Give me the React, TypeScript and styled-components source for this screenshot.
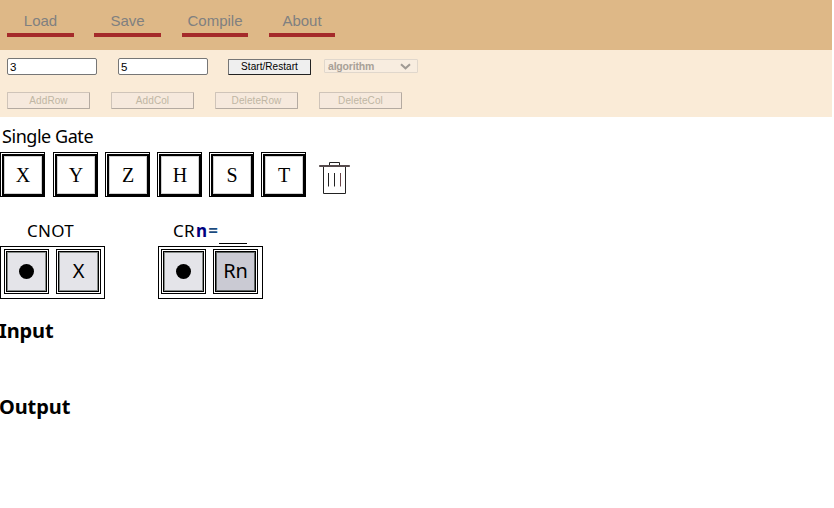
import React from "react";
import styled, { createGlobalStyle } from "styled-components";

const Global = createGlobalStyle`
  * { box-sizing: border-box; }
  body { margin: 0; background: #fff; color: #000; font-family: "Noto Sans", sans-serif; overflow: hidden; }
`;

const Page = styled.div`
  height: 508px;
  padding-right: 2px;
  overflow: hidden;
`;

const Nav = styled.nav`
  display: flex;
  height: 50px;
  padding-left: 7px;
  background: #deb887;
`;

const NavItem = styled.a<{ $width: number; $gap: number }>`
  width: ${(p) => p.$width}px;
  height: 37px;
  margin-right: ${(p) => p.$gap}px;
  padding-top: 12px;
  border-bottom: 4px solid #a52a2a;
  font: 15px/18px "Liberation Sans", Arial, sans-serif;
  color: #808080;
  text-align: center;
  white-space: nowrap;
`;

const Controls = styled.section`
  height: 67px;
  padding: 8px 7px 0;
  background: #faebd7;
`;

const ControlRow = styled.div<{ $height: number }>`
  display: flex;
  align-items: flex-start;
  height: ${(p) => p.$height}px;
`;

const NumberField = styled.input`
  width: 90px;
  height: 17px;
  margin: 0 21px 0 0;
  padding: 0 2px;
  border: 1px solid #767676;
  border-radius: 2px;
  background: #fff;
  font: 11.5px "Liberation Sans", Arial, sans-serif;
  color: #000;
  outline: none;
  &:nth-of-type(2) { margin-right: 20px; }
`;

const StartButton = styled.button`
  width: 83px;
  height: 16px;
  margin: 1px 13px 0 0;
  padding: 0 0 1px;
  border: 1px solid #222;
  border-top-color: #767676;
  border-left-color: #767676;
  border-radius: 1px;
  background: #efefef;
  font: 10px/13px "Liberation Sans", Arial, sans-serif;
  letter-spacing: 0.05px;
  color: #000;
`;

const Select = styled.div`
  display: flex;
  align-items: center;
  justify-content: space-between;
  width: 94px;
  height: 14px;
  margin-top: 1px;
  padding: 0 6px 0 3px;
  border: 1px solid #e0d7cc;
  border-radius: 1px;
  background: #f8ede0;
  font: bold 10.5px/12px "Liberation Sans", Arial, sans-serif;
  letter-spacing: -0.2px;
  color: #a8a198;
`;

const EditButton = styled.button`
  width: 83px;
  height: 17px;
  margin: 0 21px 0 0;
  padding: 0;
  border: 1px solid #b4aaa1;
  border-top-color: #cfc4b9;
  border-left-color: #cfc4b9;
  border-radius: 1px;
  background: #f6e9dd;
  font: 10px/14px "Liberation Sans", Arial, sans-serif;
  letter-spacing: 0.1px;
  color: #bfb6a3;
`;

const GateTitle = styled.div`
  height: 35px;
  padding: 5px 0 0 2px;
  font-size: 18px;
  line-height: 28px;
  letter-spacing: -0.45px;
`;

const GateRow = styled.div`
  display: flex;
  gap: 7px;
  height: 45px;
`;

const Cell = styled.div`
  width: 45px;
  height: 45px;
  padding: 1px;
  border: 1px solid #000;
  background: #fff;
  ${GateRow} > &:first-child { margin-right: 1px; }
`;

const Face = styled.div<{ $kind: "single" | "control" | "rotate" }>`
  display: flex;
  align-items: center;
  justify-content: center;
  width: ${(p) => (p.$kind === "single" ? 42 : 41)}px;
  height: ${(p) => (p.$kind === "single" ? 42 : 41)}px;
  padding-top: ${(p) => (p.$kind === "single" ? 1 : 0)}px;
  border: ${(p) => (p.$kind === "single" ? 2 : 1)}px solid #000;
  background: ${(p) => (p.$kind === "single" ? "#fff" : p.$kind === "control" ? "#e4e4e9" : "#cacad3")};
  box-shadow: inset 0 0 0 1px ${(p) => (p.$kind === "single" ? "#d0d0d0" : p.$kind === "control" ? "#868b88" : "#5d6361")};
  font: ${(p) => (p.$kind === "single" ? '20px "Liberation Serif", "Times New Roman", serif' : '20px/28px "Noto Sans", sans-serif')};
  letter-spacing: ${(p) => (p.$kind === "rotate" ? -0.1 : 0)}px;
`;

const FaceText = styled.span`
  margin-top: -2px;
`;

const TrashIcon = styled.svg`
  display: block;
  margin: 10px 0 0 6px;
`;

const PairArea = styled.div`
  display: flex;
  gap: 53px;
  margin-top: 20px;
  height: 82px;
`;

const Pair = styled.div`
  width: 105px;
`;

const PairTitle = styled.div<{ $indent: number }>`
  display: flex;
  height: 29px;
  padding-left: ${(p) => p.$indent}px;
  font-size: 17px;
  line-height: 28px;
  letter-spacing: 0.3px;
  white-space: nowrap;
`;

const Variable = styled.span`
  margin-left: 1px;
  color: #000080;
  font-weight: 700;
`;

const Equals = styled.span`
  width: 12px;
  text-align: center;
  color: #1a4b80;
  font-weight: 600;
`;

const Blank = styled.span`
  width: 28px;
  height: 27px;
  border-bottom: 1px solid #000;
`;

const PairBox = styled.div<{ $inset: number }>`
  display: flex;
  gap: 7px;
  height: 53px;
  padding: 2px 0 2px ${(p) => p.$inset}px;
  border: 1px solid #000;
`;

const Dot = styled.span`
  width: 15px;
  height: 15px;
  border-radius: 50%;
  background: #000;
`;

const Heading = styled.h2<{ $gap: number }>`
  margin: ${(p) => p.$gap}px 0 0 -1px;
  font-size: 20px;
  line-height: 28px;
  font-weight: 700;
  letter-spacing: -0.1px;
`;

const gates = ["X", "Y", "Z", "H", "S", "T"];
const edits = ["AddRow", "AddCol", "DeleteRow", "DeleteCol"];

export default function App() {
  return (
    <Page>
      <Global />
      <Nav>
        <NavItem $width={67} $gap={20}>Load</NavItem>
        <NavItem $width={67} $gap={21}>Save</NavItem>
        <NavItem $width={66} $gap={21}>Compile</NavItem>
        <NavItem $width={66} $gap={0}>About</NavItem>
      </Nav>
      <Controls>
        <ControlRow $height={34}>
          <NumberField defaultValue="3" />
          <NumberField defaultValue="5" />
          <StartButton>Start/Restart</StartButton>
          <Select>
            algorithm
            <svg width="11" height="7" viewBox="0 0 11 7" fill="none" stroke="#a09a93" strokeWidth="2">
              <path d="M1 1.2 5.5 5.3 10 1.2" />
            </svg>
          </Select>
        </ControlRow>
        <ControlRow $height={17}>
          {edits.map((label) => (
            <EditButton key={label}>{label}</EditButton>
          ))}
        </ControlRow>
      </Controls>
      <GateTitle>Single Gate</GateTitle>
      <GateRow>
        {gates.map((g) => (
          <Cell key={g}>
            <Face $kind="single">{g}</Face>
          </Cell>
        ))}
        <TrashIcon width="31" height="33" viewBox="0 0 31 33" fill="none">
          <path d="M10.5 3V0.5h10V3" stroke="#222" />
          <path d="M0.5 3.5h30v1h-30z" fill="#5a3c40" stroke="#554a4c" />
          <path d="M4.5 5v26.500h22V5" stroke="#222" />
          <path d="M9.500 11v13.500M15.500 11v13.500" stroke="#222" />
          <path d="M21.500 11v13.500" stroke="#6a4548" />
        </TrashIcon>
      </GateRow>
      <PairArea>
        <Pair>
          <PairTitle $indent={27}>CNOT</PairTitle>
          <PairBox $inset={3}>
            <Cell><Face $kind="control"><Dot /></Face></Cell>
            <Cell><Face $kind="control"><FaceText>X</FaceText></Face></Cell>
          </PairBox>
        </Pair>
        <Pair>
          <PairTitle $indent={15}>
            CR<Variable>n</Variable><Equals>=</Equals><Blank />
          </PairTitle>
          <PairBox $inset={2}>
            <Cell><Face $kind="control"><Dot /></Face></Cell>
            <Cell><Face $kind="rotate"><FaceText>Rn</FaceText></Face></Cell>
          </PairBox>
        </Pair>
      </PairArea>
      <Heading $gap={18}>Input</Heading>
      <Heading $gap={48}>Output</Heading>
    </Page>
  );
}
